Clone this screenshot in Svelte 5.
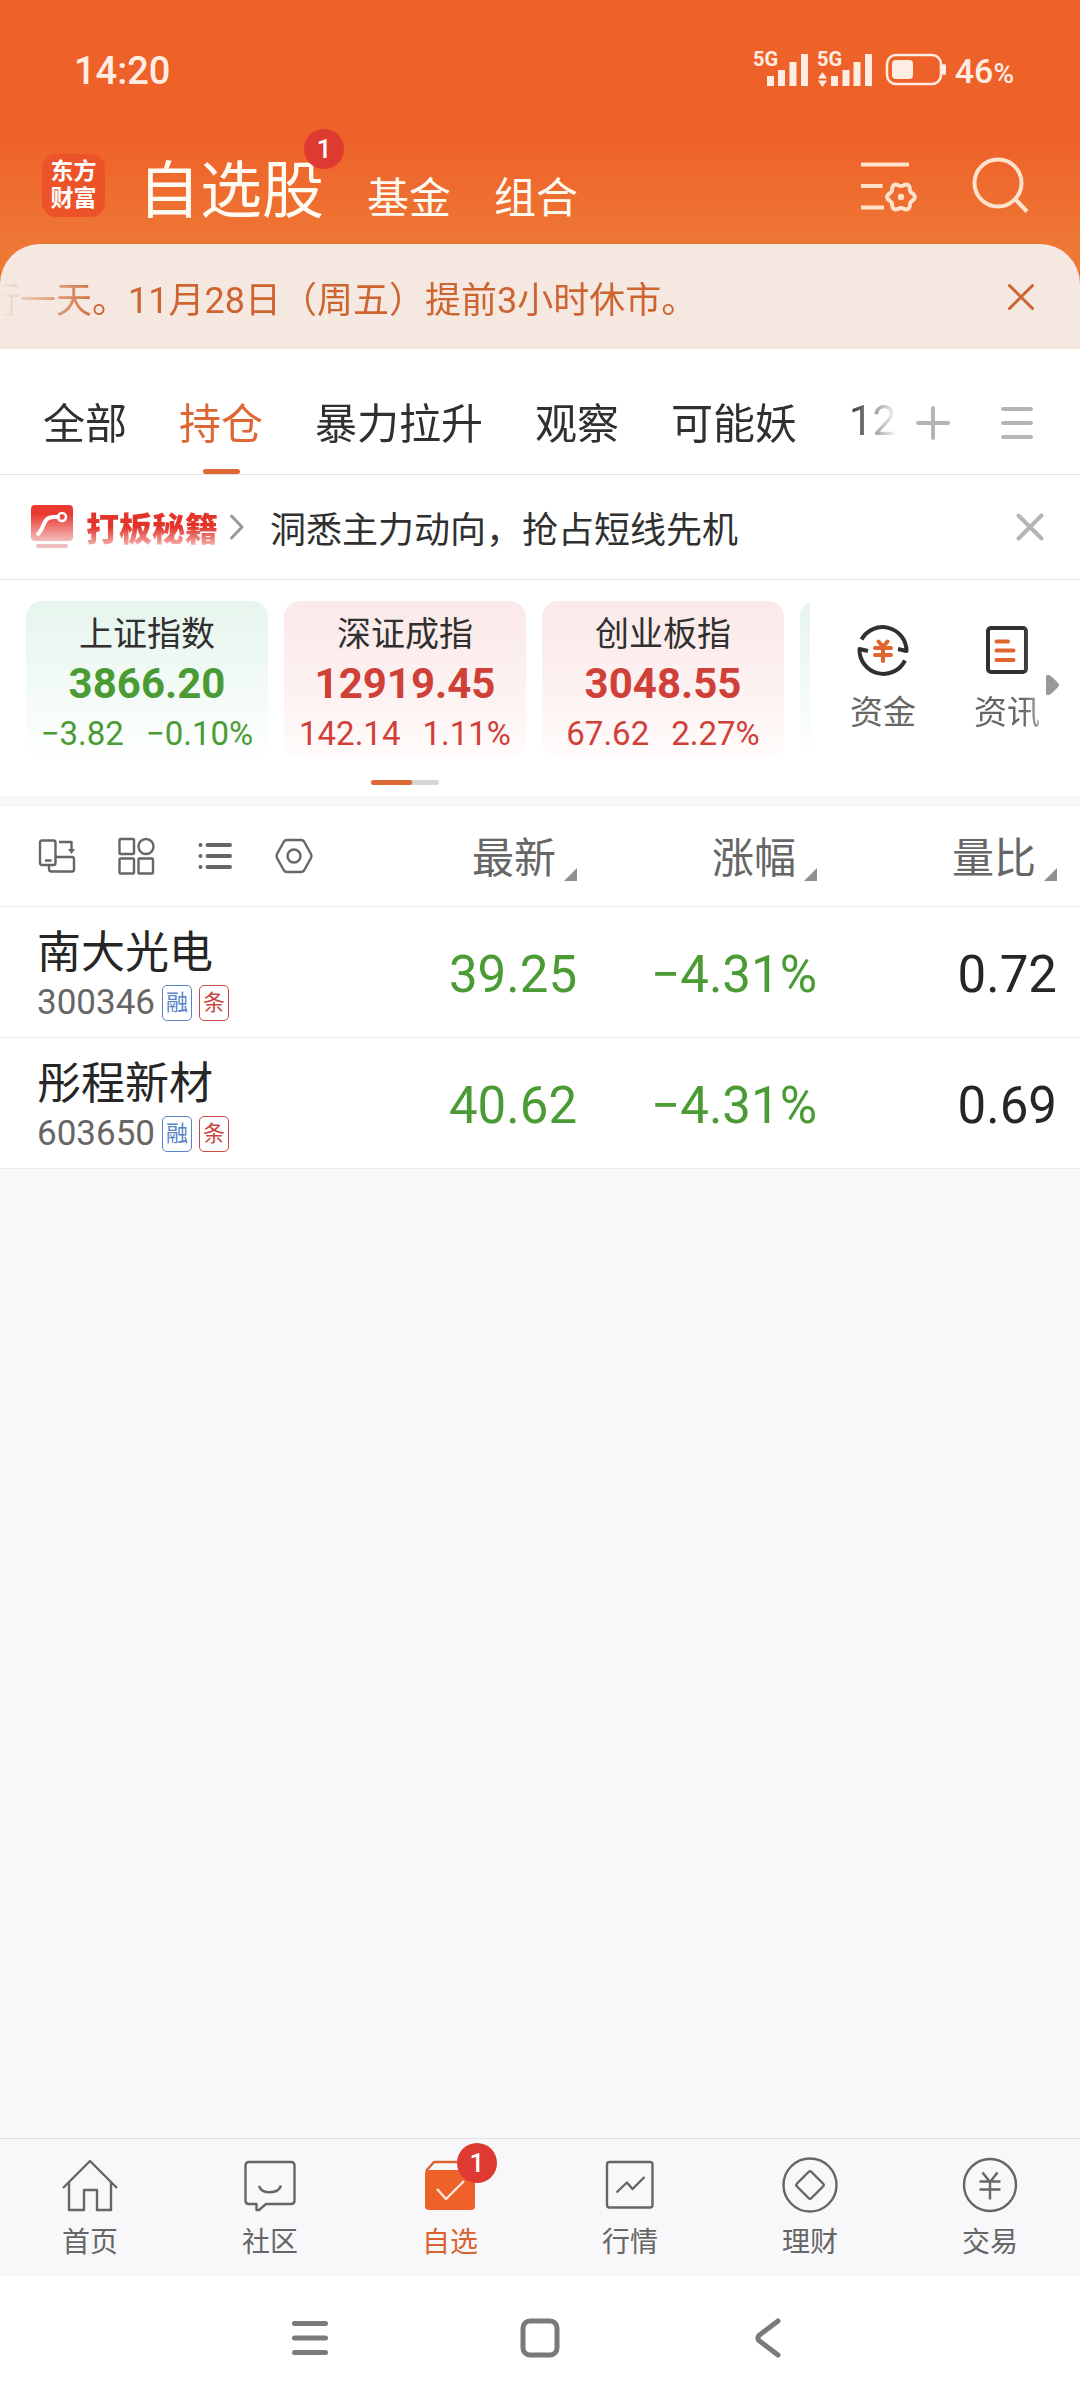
<script>
	const groups = ["全部", "持仓", "暴力拉升", "观察", "可能妖", "12"];

	const indices = [
		{ name: "上证指数", value: "3866.20", change: "−3.82", percent: "−0.10%", trend: "down" },
		{ name: "深证成指", value: "12919.45", change: "142.14", percent: "1.11%", trend: "up" },
		{ name: "创业板指", value: "3048.55", change: "67.62", percent: "2.27%", trend: "up" }
	];

	const columns = ["最新", "涨幅", "量比"];

	const stocks = [
		{ name: "南大光电", code: "300346", price: "39.25", percent: "−4.31%", ratio: "0.72" },
		{ name: "彤程新材", code: "603650", price: "40.62", percent: "−4.31%", ratio: "0.69" }
	];

	const navItems = [
		{
			label: "首页",
			d: "M1 31 L28 4 L55 31 M7 25 V53 H22 V33 H35 V53 H49 V25"
		},
		{
			label: "社区",
			d: "M14.5 53 V47 H7 Q3.5 47 3.5 43.5 V8.5 Q3.5 5 7 5 H49 Q52.5 5 52.5 8.5 V43.5 Q52.5 47 49 47 H24 L17 53 Z M17 29 C20 37.5 36 37.5 39 28.5"
		},
		{ label: "自选", badge: 1 },
		{
			label: "行情",
			d: "M7 5 H48 Q50.5 5 50.5 7.5 V48 Q50.5 50.5 48 50.5 H7.5 Q5 50.5 5 48 V7.5 Q5 5 7.5 5 M14.5 35.5 L25 25.5 L30.5 32 L42.5 20"
		},
		{
			label: "理财",
			d: "M28 1.5 A26.5 26.5 0 1 1 28 54.5 A26.5 26.5 0 1 1 28 1.5 Z M26.5 15 Q28 13.5 29.5 15 L41 26.5 Q42.5 28 41 29.5 L29.5 41 Q28 42.5 26.5 41 L15 29.5 Q13.5 28 15 26.5 Z"
		},
		{
			label: "交易",
			d: "M28 2 A26 26 0 1 1 28 54 A26 26 0 1 1 28 2 Z M20.5 15.5 L28 25 L35.5 15.5 M17.5 24.5 H38.5 M17.5 32.5 H38.5 M28 25 V42.5"
		}
	];

	let activeGroup = $state("持仓");
	let activeNav = $state("自选");
	let noticeOpen = $state(true);
	let promoOpen = $state(true);

	// Six-lobed outline of the small gear.
	function gearPath(cx, cy, radius, depth) {
		const points = [];
		for (let i = 0; i < 72; i += 1) {
			const angle = (i / 72) * Math.PI * 2;
			const r = radius + depth * Math.cos(angle * 6);
			points.push(`${(cx + r * Math.cos(angle)).toFixed(2)} ${(cy + r * Math.sin(angle)).toFixed(2)}`);
		}
		return `M${points.join(" L")} Z`;
	}
</script>

{#snippet cross(size)}
	<svg width={size} height={size} viewBox="0 0 28 28" aria-hidden="true">
		<path d="M2.5 2.5 L25.5 25.5 M25.5 2.5 L2.5 25.5" />
	</svg>
{/snippet}

<div class="screen">
	<div class="top">
		<div class="status">
			<span class="clock">14:20</span>
			<div class="status-right">
				<svg width="192" height="40" viewBox="0 0 192 40" aria-hidden="true">
					<text x="0" y="15" class="net">5G</text>
					<path class="bars" d="M17.5 25 V35 M28.5 19 V35 M40 11 V35 M51.5 3 V35" />
					<text x="64" y="15" class="net">5G</text>
					<path class="fill" d="M65 27.5 L69.5 21 L74 27.5 Z M65 29.5 H74 L69.5 36 Z" />
					<path class="bars" d="M81.5 25 V35 M93 19 V35 M104 11 V35 M115.5 3 V35" />
					<rect class="battery" x="134" y="4" width="54" height="29" rx="9" />
					<rect class="fill" x="139" y="9" width="21" height="19" rx="4" />
					<rect class="fill" x="189" y="13" width="4" height="11" rx="2" />
				</svg>
				<span class="charge">46<small>%</small></span>
			</div>
		</div>

		<header class="app-bar">
			<div class="logo"><span>东方</span><span>财富</span></div>
			<nav class="sections" aria-label="栏目">
				<a class="current" href="#stocks">自选股<i class="badge">1</i></a>
				<a href="#funds">基金</a>
				<a href="#portfolio">组合</a>
			</nav>
			<div class="app-actions">
				<button type="button" aria-label="设置">
					<svg width="60" height="60" viewBox="0 0 60 60">
						<path d="M2 9.5 H50 M2 31 H23.5 M2 52.5 H25" />
						<path d={gearPath(42, 42, 12.4, 1.5)} />
						<circle class="dot" cx="42" cy="42" r="3.2" />
					</svg>
				</button>
				<button type="button" aria-label="搜索">
					<svg width="60" height="60" viewBox="0 0 60 60">
						<circle cx="28" cy="28" r="23.5" />
						<path d="M45 44 L57 56.5" />
					</svg>
				</button>
			</div>
		</header>

		{#if noticeOpen}
			<div class="notice">
				<p>行一天。11月28日（周五）提前3小时休市。</p>
				<button type="button" aria-label="关闭公告" onclick={() => (noticeOpen = false)}>
					{@render cross(28)}
				</button>
			</div>
		{/if}
	</div>

	<div class="groups">
		<div class="group-list" role="tablist">
			{#each groups as group}
				<button
					type="button"
					role="tab"
					aria-selected={group === activeGroup}
					class:active={group === activeGroup}
					onclick={() => (activeGroup = group)}
				>
					{group}
				</button>
			{/each}
		</div>
		<div class="group-actions">
			<button type="button" aria-label="添加分组">
				<svg width="36" height="36" viewBox="0 0 36 36"><path d="M18 3 V33 M3 18 H33" /></svg>
			</button>
			<button type="button" aria-label="管理分组">
				<svg width="36" height="36" viewBox="0 0 36 36"><path d="M4 4 H32 M4 18 H32 M4 32 H32" /></svg>
			</button>
		</div>
	</div>

	{#if promoOpen}
		<div class="promo">
			<a href="#promo">
				<svg class="promo-icon" width="42" height="44" viewBox="0 0 42 44" aria-hidden="true">
					<defs>
						<linearGradient id="promo-red" x1="0" y1="0" x2="0" y2="1">
							<stop offset="0.25" stop-color="#e83a31" />
							<stop offset="1" stop-color="#f4bcba" />
						</linearGradient>
					</defs>
					<rect width="42" height="36" rx="4" fill="url(#promo-red)" />
					<path d="M7 29 C14 23 11 12 23 12 H27" stroke="#fff" stroke-width="4" stroke-linecap="round" fill="none" />
					<circle cx="31" cy="12" r="4" stroke="#fff" stroke-width="2.5" fill="none" />
					<rect x="5" y="39" width="32" height="4" rx="2" fill="#efbfbf" />
				</svg>
				<strong>打板秘籍</strong>
				<svg class="chevron" width="16" height="26" viewBox="0 0 16 26" aria-hidden="true">
					<path d="M2.5 2 L13 13 L2.5 24" />
				</svg>
				<span>洞悉主力动向，抢占短线先机</span>
			</a>
			<button type="button" aria-label="关闭" onclick={() => (promoOpen = false)}>
				{@render cross(28)}
			</button>
		</div>
	{/if}

	<section class="market">
		<div class="market-main">
			<div class="cards">
				{#each indices as index}
					<article class={index.trend}>
						<h2>{index.name}</h2>
						<b>{index.value}</b>
						<p><span>{index.change}</span><span>{index.percent}</span></p>
					</article>
				{/each}
				<article class="down" aria-hidden="true"></article>
			</div>
			<div class="pager"><span></span></div>
		</div>
		<div class="shortcuts">
			<a href="#capital">
				<svg width="56" height="56" viewBox="0 0 56 56" aria-hidden="true">
					<path d="M6.5 17.5 A24 24 0 0 1 51.5 29 L43 27 M50 38.5 A24 24 0 0 1 4.5 27 L13 29" />
					<path class="accent" d="M23.5 19.5 L28 25 L32.5 19.5 M20 26 H36 M20 33 H36 M28 26 V39" />
				</svg>
				资金
			</a>
			<a class="faded" href="#news">
				<svg width="56" height="56" viewBox="0 0 56 56" aria-hidden="true">
					<rect x="9" y="6" width="38" height="44" rx="3" />
					<path class="accent" d="M17.5 19.5 H29 M17.5 28.5 H34.5 M17.5 38 H34.5" />
				</svg>
				资讯
			</a>
			<svg class="more" width="14" height="22" viewBox="0 0 14 22" aria-hidden="true">
				<path d="M0 3 Q0 0 3 1 Q5 1.5 12 9 Q14 11 12 13 Q5 20.5 3 21 Q0 22 0 19 Z" />
			</svg>
		</div>
	</section>

	<table>
		<thead>
			<tr>
				<th class="tools-cell">
					<div class="tools">
						<button type="button" aria-label="横屏">
							<svg width="40" height="40" viewBox="0 0 40 40">
								<path d="M5 4.5 H16.5 Q18.5 4.5 18.5 6.5 V27 Q18.5 29 16.5 29 H5 Q3 29 3 27 V6.5 Q3 4.5 5 4.5 Z M8 24.5 H14.5" />
								<path d="M12 29 V33 Q12 35.5 14.5 35.5 H35 Q37 35.5 37 33.5 V23.5 Q37 21 35 21 H18.5 M22 6 H34.5 V14" />
								<path class="solid" d="M31 13 H38 L34.5 18 Z" />
							</svg>
						</button>
						<button type="button" aria-label="宫格">
							<svg width="40" height="40" viewBox="0 0 40 40">
								<rect x="3.5" y="3" width="14.5" height="15" rx="1" />
								<circle cx="30" cy="10.5" r="7.5" />
								<rect x="3.5" y="22.5" width="14.5" height="15" rx="1" />
								<rect x="22.5" y="22.5" width="14.5" height="15" rx="1" />
							</svg>
						</button>
						<button type="button" aria-label="列表">
							<svg width="40" height="40" viewBox="0 0 40 40">
								<path class="thick" d="M12.5 9 H35 M12.5 20 H35 M12.5 31 H35 M5.5 9 V9.01 M5.5 20 V20.01 M5.5 31 V31.01" />
							</svg>
						</button>
						<button type="button" aria-label="表头设置">
							<svg width="40" height="40" viewBox="0 0 40 40">
								<path d="M13 4 H27 Q29 4 30 5.5 L37 18 Q38 20 37 22 L30 34.5 Q29 36 27 36 H13 Q11 36 10 34.5 L3 22 Q2 20 3 18 L10 5.5 Q11 4 13 4 Z" />
								<circle cx="20" cy="20" r="6.5" />
							</svg>
						</button>
					</div>
				</th>
				{#each columns as column}
					<th><button type="button" class="sort">{column}</button></th>
				{/each}
			</tr>
		</thead>
		<tbody>
			{#each stocks as stock}
				<tr>
					<td class="stock">
						<div class="name">{stock.name}</div>
						<div class="code">
							{stock.code}<span class="tag blue">融</span><span class="tag red">条</span>
						</div>
					</td>
					<td class="fall">{stock.price}</td>
					<td class="fall">{stock.percent}</td>
					<td>{stock.ratio}</td>
				</tr>
			{/each}
		</tbody>
	</table>

	<nav class="bottom-nav" aria-label="主导航">
		{#each navItems as item}
			<a href="#{item.label}" class:active={item.label === activeNav} onclick={() => (activeNav = item.label)}>
				<span class="nav-icon">
					<svg width="56" height="56" viewBox="0 0 56 56" aria-hidden="true">
						{#if item.d}
							<path d={item.d} />
						{:else}
							<path d="M4 14 L12 5 H44 L52 14" />
							<rect class="box" x="3" y="13" width="50" height="40" rx="4" />
							<path class="tick" d="M15 32 L24 42 L42 24" />
						{/if}
					</svg>
					{#if item.badge}<i class="badge">{item.badge}</i>{/if}
				</span>
				{item.label}
			</a>
		{/each}
	</nav>

	<div class="system-nav">
		<button type="button" aria-label="最近任务">
			<svg width="40" height="40" viewBox="0 0 40 40"><path d="M4.5 5.5 H35.5 M4.5 20 H35.5 M4.5 34.5 H35.5" /></svg>
		</button>
		<button type="button" aria-label="主屏幕">
			<svg width="40" height="40" viewBox="0 0 40 40"><rect x="3" y="3" width="34" height="34" rx="7" /></svg>
		</button>
		<button type="button" aria-label="返回">
			<svg width="40" height="40" viewBox="0 0 40 40"><path d="M28 3 L9.5 17 Q6 20 9.5 23 L28 37" /></svg>
		</button>
	</div>
</div>

<style>
	:global(body) {
		background: #f7f8fa;
	}

	.screen {
		display: flex;
		flex-direction: column;
		min-height: 100vh;
		font-family: Roboto, "Noto Sans CJK SC", sans-serif;
		color: #303030;
		background: #f7f8fa;
	}

	button {
		display: block;
		padding: 0;
		border: 0;
		background: none;
		font: inherit;
		color: inherit;
	}

	a {
		color: inherit;
		text-decoration: none;
	}

	svg {
		display: block;
		flex-shrink: 0;
		fill: none;
		stroke-linejoin: round;
	}

	h2,
	p {
		margin: 0;
	}

	.badge {
		position: absolute;
		width: 40px;
		height: 40px;
		border-radius: 50%;
		background: #de3a32;
		color: #fff;
		font-size: 26px;
		font-style: normal;
		font-weight: 500;
		line-height: 40px;
		text-align: center;
	}

	.top {
		background: linear-gradient(#ee622a 140px, #ee7835 250px);
	}

	.status {
		display: flex;
		align-items: center;
		justify-content: space-between;
		height: 80px;
		padding: 31px 66px 0 74px;
		color: #ffede4;
	}

	.clock {
		font-size: 38px;
		font-weight: 500;
	}

	.status-right {
		display: flex;
		align-items: center;
		gap: 10px;
	}

	.status-right svg {
		overflow: visible;
	}

	.net {
		font-size: 20px;
		font-weight: 700;
		fill: #ffede4;
	}

	.bars {
		stroke: #ffede4;
		stroke-width: 7;
	}

	.fill {
		fill: #ffede4;
	}

	.battery {
		stroke: #ffede4;
		stroke-width: 2.5;
	}

	.charge {
		font-size: 34px;
		font-weight: 500;
	}

	.charge small {
		font-size: 28px;
	}

	.app-bar {
		display: flex;
		align-items: center;
		height: 118px;
		padding: 15px 50px 0 42px;
	}

	.logo {
		display: flex;
		flex-direction: column;
		align-items: center;
		justify-content: center;
		width: 63px;
		height: 63px;
		border-radius: 14px;
		background: #ec5329;
		color: #fff;
		font-size: 23px;
		font-weight: 700;
		line-height: 27px;
	}

	.sections {
		display: flex;
		flex: 1;
		align-items: baseline;
		gap: 43px;
		padding-top: 14px;
		margin-left: 33px;
		color: #fffaf2;
		font-size: 42px;
	}

	.sections .current {
		position: relative;
		font-size: 62px;
		line-height: 70px;
	}

	.sections .badge {
		top: -28px;
		right: -20px;
	}

	.app-actions {
		display: flex;
		gap: 51px;
	}

	.app-actions svg {
		stroke: #ffe2cc;
		stroke-width: 4;
	}

	.app-actions .dot {
		fill: #ffe2cc;
		stroke: none;
	}

	.notice {
		display: flex;
		align-items: center;
		justify-content: space-between;
		height: 105px;
		padding-right: 45px;
		border-radius: 40px 40px 0 0;
		background: #f4e8e1;
		color: #ce6430;
	}

	.notice p {
		overflow: hidden;
		margin-right: 40px;
		font-size: 36px;
		white-space: nowrap;
		text-indent: -16px;
		mask-image: linear-gradient(to right, transparent, #000 100px);
	}

	.notice svg {
		stroke: #ce6430;
		stroke-width: 3;
		stroke-linecap: round;
	}

	.groups {
		display: flex;
		justify-content: space-between;
		height: 125px;
		border-bottom: 1px solid #e4e4e4;
		background: #fff;
	}

	.group-list {
		display: flex;
		flex: 1;
		gap: 52px;
		overflow: hidden;
		padding-left: 43px;
		font-size: 42px;
		white-space: nowrap;
		mask-image: linear-gradient(to left, transparent, #000 48px);
	}

	.group-list button {
		display: flex;
		flex-direction: column;
		align-items: center;
		justify-content: center;
		position: relative;
		padding-top: 20px;
		padding-bottom: 2px;
	}

	.group-list button.active {
		color: #df6734;
	}

	.group-list button.active::after {
		content: "";
		position: absolute;
		bottom: 0;
		width: 37px;
		height: 5px;
		border-radius: 3px;
		background: #df6734;
	}

	.group-actions {
		display: flex;
		align-items: center;
		gap: 48px;
		padding: 22px 45px 0 18px;
	}

	.group-actions svg,
	.promo button svg {
		stroke: #b5b5b5;
		stroke-width: 4;
		stroke-linecap: round;
	}

	.promo {
		display: flex;
		align-items: center;
		justify-content: space-between;
		height: 104px;
		padding: 0 36px 0 31px;
		border-bottom: 1px solid #e4e4e4;
		background: #fff;
		font-size: 36px;
	}

	.promo a {
		display: flex;
		align-items: center;
	}

	.promo strong {
		margin: 0 11px 0 13px;
		font-size: 33px;
		font-weight: 900;
		background: linear-gradient(#e3342c 50%, #f2a5a1 85%);
		background-clip: text;
		color: transparent;
	}

	.chevron {
		margin-right: 25px;
		stroke: #999;
		stroke-width: 3;
		stroke-linecap: round;
	}

	.market {
		display: flex;
		padding: 21px 0 11px;
		border-bottom: 11px solid #f6f7f9;
		background: #fff;
	}

	.market-main {
		flex: 1;
		min-width: 0;
	}

	.cards {
		display: flex;
		gap: 16px;
		overflow: hidden;
		padding-left: 26px;
	}

	article {
		display: flex;
		flex: 0 0 242px;
		flex-direction: column;
		align-items: center;
		box-sizing: border-box;
		height: 157px;
		padding-top: 8px;
		border-radius: 16px;
	}

	article.down {
		background: linear-gradient(#e6f5ed, #fdfffe);
		color: #4b9b35;
	}

	article.up {
		background: linear-gradient(#fae9e8, #fef4f4 70%, #fffcfb);
		color: #cf4038;
	}

	article h2 {
		color: #303030;
		font-size: 34px;
		font-weight: 400;
		line-height: 50px;
	}

	article b {
		font-size: 42px;
		line-height: 50px;
	}

	article p {
		display: flex;
		gap: 22px;
		font-size: 33px;
		line-height: 50px;
		white-space: nowrap;
	}

	.pager {
		width: 68px;
		height: 5px;
		margin: 22px auto 0;
		border-radius: 3px;
		background: #d5d5da;
	}

	.pager span {
		display: block;
		width: 41px;
		height: 5px;
		border-radius: 3px;
		background: #df6734;
	}

	.shortcuts {
		position: relative;
		display: flex;
		box-sizing: border-box;
		width: 270px;
		padding: 21px 11px 0;
	}

	.shortcuts a {
		display: flex;
		flex: 1;
		flex-direction: column;
		align-items: center;
		gap: 8px;
		color: #666;
		font-size: 33px;
	}

	.shortcuts .faded {
		mask-image: linear-gradient(to left, transparent 8px, #000 46px);
	}

	.shortcuts a svg {
		stroke: #303030;
		stroke-width: 4;
	}

	.shortcuts a .accent {
		stroke: #e0662f;
		stroke-linecap: round;
	}

	.shortcuts .more {
		position: absolute;
		top: 73px;
		right: 20px;
		fill: #999;
	}

	table {
		width: 100%;
		border-collapse: collapse;
		table-layout: fixed;
		background: #fff;
		color: #262626;
		font-size: 51px;
	}

	tr {
		border-bottom: 1px solid #ececee;
	}

	th,
	td {
		box-sizing: border-box;
		width: 22.22%;
		padding: 0 23px 0 0;
		font-weight: 400;
		text-align: right;
	}

	th {
		height: 99px;
		color: #666;
		font-size: 42px;
	}

	td {
		height: 131px;
		padding-top: 6px;
	}

	.tools-cell,
	.stock {
		width: auto;
		padding-right: 0;
		padding-left: 37px;
		text-align: left;
	}

	.tools {
		display: flex;
		gap: 39px;
	}

	.tools svg {
		stroke: #666;
		stroke-width: 2.4;
	}

	.tools .thick {
		stroke-width: 4;
		stroke-linecap: round;
	}

	.tools .solid {
		fill: #666;
		stroke: none;
	}

	.sort {
		display: flex;
		align-items: flex-end;
		gap: 8px;
		padding-bottom: 4px;
		margin-left: auto;
	}

	.sort::after {
		content: "";
		margin-bottom: 4px;
		border-bottom: 13px solid #8e8e93;
		border-left: 13px solid transparent;
	}

	.fall {
		color: #4b9b35;
	}

	.name {
		font-size: 44px;
		line-height: 56px;
	}

	.code {
		display: flex;
		align-items: center;
		gap: 7px;
		color: #666;
		font-size: 35px;
		line-height: 44px;
	}

	.tag {
		box-sizing: border-box;
		width: 30px;
		height: 36px;
		border: 1px solid;
		border-radius: 5px;
		font-size: 22px;
		line-height: 34px;
		text-align: center;
	}

	.tag.blue {
		color: #5583c6;
	}

	.tag.red {
		color: #c8473f;
	}

	.bottom-nav {
		display: flex;
		box-sizing: border-box;
		height: 138px;
		margin-top: auto;
		border-top: 1px solid #e2e2e4;
		background: #f8f8fa;
	}

	.bottom-nav a {
		display: flex;
		flex: 1;
		flex-direction: column;
		align-items: center;
		gap: 12px;
		padding-top: 18px;
		color: #666;
		font-size: 28px;
		line-height: 36px;
	}

	.bottom-nav .active {
		color: #d9632f;
	}

	.nav-icon {
		position: relative;
	}

	.nav-icon svg {
		stroke: currentColor;
		stroke-width: 2.4;
	}

	.nav-icon .box {
		fill: #ee622a;
		stroke: none;
	}

	.nav-icon .tick {
		stroke: #ffe9dc;
	}

	.nav-icon .badge {
		top: -14px;
		left: 35px;
	}

	.system-nav {
		display: flex;
		align-items: center;
		justify-content: center;
		gap: 190px;
		height: 124px;
		background: #fff;
	}

	.system-nav svg {
		stroke: #7a7a7a;
		stroke-width: 5;
		stroke-linecap: round;
	}
</style>
